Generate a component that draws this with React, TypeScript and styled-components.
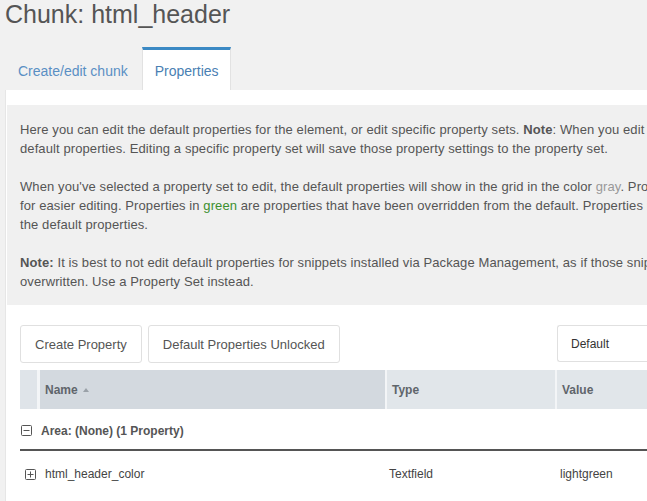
import React from "react";
import styled, { createGlobalStyle } from "styled-components";

const Global = createGlobalStyle`
  html, body {
    margin: 0;
    padding: 0;
    background: #f1f1f1;
    overflow: hidden;
  }
  body {
    font-family: "Liberation Sans", Arial, sans-serif;
    color: #555;
  }
`;

const Page = styled.div`
  width: 1000px;
  display: flex;
  flex-direction: column;
`;

const Title = styled.h2`
  margin: 0;
  padding-left: 5px;
  font-size: 25px;
  line-height: 28px;
  font-weight: normal;
  color: #555;
`;

const TabBar = styled.div`
  display: flex;
  margin-top: 19px;
  padding-left: 5px;
  gap: 2px;
  height: 43px;
  align-items: stretch;
`;

const Tab = styled.div<{ $active?: boolean }>`
  box-sizing: border-box;
  padding: 13px 11px 0 12px;
  font-size: 14px;
  line-height: 16px;
  color: ${(p) => (p.$active ? "#4a7fb3" : "#5a8fc4")};
  background: ${(p) => (p.$active ? "#fff" : "transparent")};
  border-top: 3px solid ${(p) => (p.$active ? "#3b89c4" : "transparent")};
  border-left: 1px solid ${(p) => (p.$active ? "#e2e2e2" : "transparent")};
  border-right: 1px solid ${(p) => (p.$active ? "#e2e2e2" : "transparent")};
  white-space: nowrap;
`;

const Panel = styled.div`
  margin-left: 5px;
  background: #fff;
  border-left: 1px solid #e6e6e6;
  padding: 15px 0 40px 1px;
  display: flex;
  flex-direction: column;
`;

const Description = styled.div`
  background: #f0f0f0;
  padding: 15px 0 14px 13px;
  font-size: 13px;
  letter-spacing: 0.1px;
  line-height: 19px;
  color: #555;
  white-space: nowrap;
`;

const Para = styled.p`
  margin: 0 0 19px;
  &:last-child {
    margin-bottom: 0;
  }
`;

const Green = styled.span`
  color: #3c8f2f;
`;

const Gray = styled.span`
  color: #999;
`;

const Content = styled.div`
  padding: 20px 0 0 13px;
  display: flex;
  flex-direction: column;
`;

const Toolbar = styled.div`
  display: grid;
  grid-template-columns: 537px 1fr;
  height: 38px;
`;

const ButtonGroup = styled.div`
  display: flex;
  gap: 6px;
`;

const Button = styled.button`
  box-sizing: border-box;
  height: 38px;
  padding: 0 14px;
  background: #fff;
  border: 1px solid #e0e0e0;
  border-radius: 3px;
  font-family: "Liberation Sans", Arial, sans-serif;
  font-size: 13px;
  color: #555;
  cursor: pointer;
`;

const Select = styled.div`
  box-sizing: border-box;
  height: 37px;
  border: 1px solid #e0e0e0;
  border-right: none;
  border-radius: 3px 0 0 3px;
  padding-left: 13px;
  display: flex;
  align-items: center;
  font-size: 12px;
  color: #333;
`;

const HeaderRow = styled.div`
  display: flex;
  margin-top: 7px;
  height: 39px;
`;

const HeaderCell = styled.div<{ $w: number; $tone: string; $sep: number }>`
  box-sizing: border-box;
  width: ${(p) => p.$w}px;
  flex: none;
  background: ${(p) => p.$tone};
  border-right: ${(p) => p.$sep}px solid #f3f5f7;
  padding-left: 5px;
  display: flex;
  align-items: center;
  gap: 5px;
  font-size: 12px;
  font-weight: bold;
  color: #5f656b;
`;

const SortArrow = styled.span`
  display: inline-block;
  width: 0;
  height: 0;
  border-left: 3.5px solid transparent;
  border-right: 3.5px solid transparent;
  border-bottom: 4px solid #9aa1a8;
  margin-top: 1px;
`;

const GroupRow = styled.div`
  display: flex;
  align-items: center;
  gap: 9px;
  height: 42px;
  padding: 3px 0 0 1px;
  box-sizing: border-box;
  border-bottom: 2px solid #555;
  font-size: 12px;
  font-weight: bold;
  color: #555;
`;

const DataRow = styled.div`
  display: flex;
  align-items: center;
  height: 42px;
  padding-top: 4px;
  box-sizing: border-box;
  font-size: 12px;
  color: #444;
`;

const DataCell = styled.div<{ $w: number; $pad: number }>`
  box-sizing: border-box;
  width: ${(p) => p.$w}px;
  flex: none;
  padding-left: ${(p) => p.$pad}px;
  display: flex;
  align-items: center;
`;

const BoxIcon = ({ plus }: { plus?: boolean }) => (
  <svg width="11" height="11" viewBox="0 0 11 11">
    <rect x="0.5" y="0.5" width="10" height="10" rx="1" fill="none" stroke="#555" />
    <line x1="2.5" y1="5.5" x2="8.5" y2="5.5" stroke="#555" />
    {plus && <line x1="5.5" y1="2.5" x2="5.5" y2="8.5" stroke="#555" />}
  </svg>
);

export default function App() {
  return (
    <>
      <Global />
      <Page>
        <Title>Chunk: html_header</Title>
        <TabBar>
          <Tab>Create/edit chunk</Tab>
          <Tab $active>Properties</Tab>
        </TabBar>
        <Panel>
          <Description>
            <Para>
              Here you can edit the default properties for the element, or edit specific property sets. <b>Note</b>: When you edit the
              <br />
              default properties. Editing a specific property set will save those property settings to the property set.
            </Para>
            <Para>
              When you've selected a property set to edit, the default properties will show in the grid in the color <Gray>gray</Gray>. Properties
              <br />
              for easier editing. Properties in <Green>green</Green> are properties that have been overridden from the default. Properties in
              <br />
              the default properties.
            </Para>
            <Para>
              <b>Note:</b> It is best to not edit default properties for snippets installed via Package Management, as if those snippets
              <br />
              overwritten. Use a Property Set instead.
            </Para>
          </Description>
          <Content>
            <Toolbar>
              <ButtonGroup>
                <Button>Create Property</Button>
                <Button>Default Properties Unlocked</Button>
              </ButtonGroup>
              <Select>Default</Select>
            </Toolbar>
            <HeaderRow>
              <HeaderCell $w={20} $tone="#dfe4e9" $sep={3} />
              <HeaderCell $w={347} $tone="#d3d9df" $sep={2}>
                Name <SortArrow />
              </HeaderCell>
              <HeaderCell $w={170} $tone="#e1e6ea" $sep={2}>
                Type
              </HeaderCell>
              <HeaderCell $w={300} $tone="#e1e6ea" $sep={0}>
                Value
              </HeaderCell>
            </HeaderRow>
            <GroupRow>
              <BoxIcon />
              Area: (None) (1 Property)
            </GroupRow>
            <DataRow>
              <DataCell $w={20} $pad={5}>
                <BoxIcon plus />
              </DataCell>
              <DataCell $w={347} $pad={5}>html_header_color</DataCell>
              <DataCell $w={170} $pad={2}>Textfield</DataCell>
              <DataCell $w={300} $pad={3}>lightgreen</DataCell>
            </DataRow>
          </Content>
        </Panel>
      </Page>
    </>
  );
}
